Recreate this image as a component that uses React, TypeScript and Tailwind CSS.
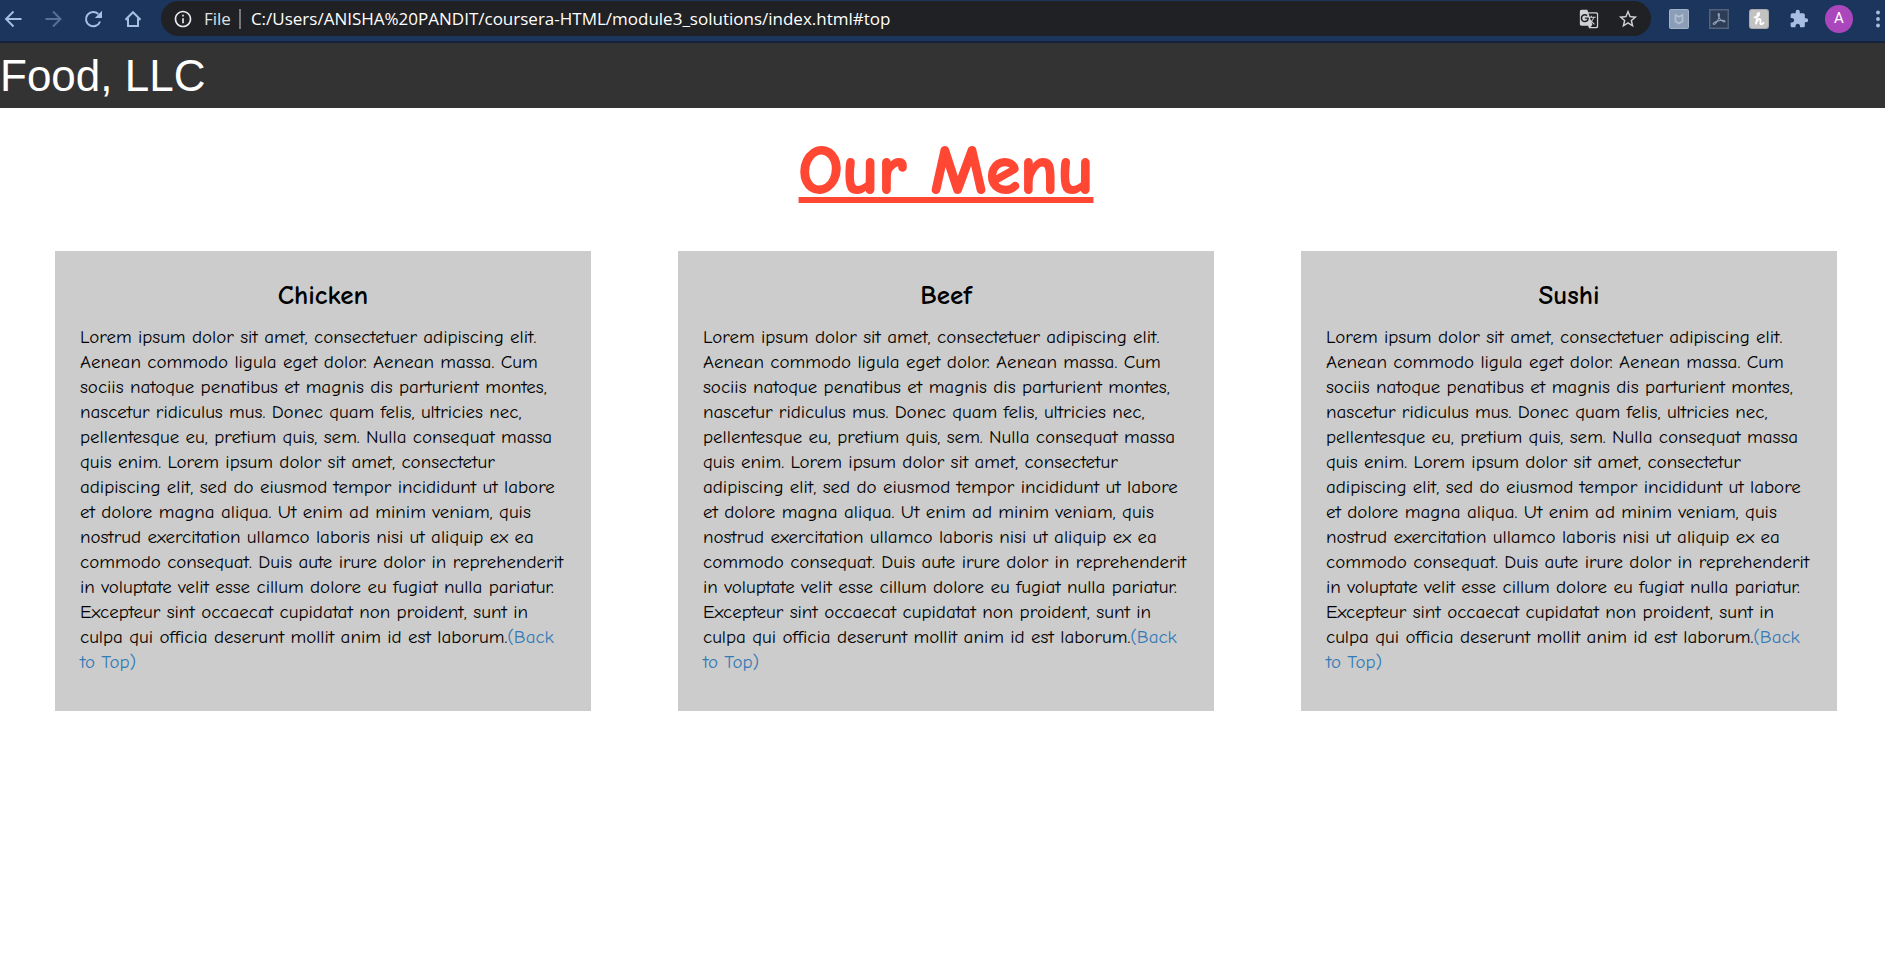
import { MdExtension, MdGTranslate, MdInfoOutline, MdStarOutline } from "react-icons/md";

const DESCRIPTION =
  "Lorem ipsum dolor sit amet, consectetuer adipiscing elit. Aenean commodo ligula eget dolor. Aenean massa. Cum sociis natoque penatibus et magnis dis parturient montes, nascetur ridiculus mus. Donec quam felis, ultricies nec, pellentesque eu, pretium quis, sem. Nulla consequat massa quis enim. Lorem ipsum dolor sit amet, consectetur adipiscing elit, sed do eiusmod tempor incididunt ut labore et dolore magna aliqua. Ut enim ad minim veniam, quis nostrud exercitation ullamco laboris nisi ut aliquip ex ea commodo consequat. Duis aute irure dolor in reprehenderit in voluptate velit esse cillum dolore eu fugiat nulla pariatur. Excepteur sint occaecat cupidatat non proident, sunt in culpa qui officia deserunt mollit anim id est laborum.";

function BrowserBar() {
  return (
    <div className="flex h-[43px] items-start border-b-2 border-[#17233c] bg-[#1b355d] pl-[3px] pt-px text-[#a9bfe2]">
      <nav className="flex h-[35px] items-center gap-5">
        <button aria-label="Back" className="size-5">
          <svg viewBox="0 0 20 20" className="size-5" fill="none" stroke="currentColor" strokeWidth="1.9">
            <path d="M18.5 10H3.5M10.5 2.5L3 10l7.5 7.5" />
          </svg>
        </button>
        <button aria-label="Forward" className="size-5 text-[#5a7197]">
          <svg viewBox="0 0 20 20" className="size-5" fill="none" stroke="currentColor" strokeWidth="1.9">
            <path d="M2.500 10h15M10 2.500L17.500 10l-7.500 7.500" />
          </svg>
        </button>
        <button aria-label="Reload" className="size-5">
          <svg viewBox="0 0 20 20" className="size-5" fill="none" stroke="currentColor" strokeWidth="2">
            <path d="M17 12.500A7.200 7.200 0 1 1 15.300 5" />
            <path d="M19 1.800V9h-7.200z" fill="currentColor" stroke="none" />
          </svg>
        </button>
        <button aria-label="Home" className="size-5">
          <svg viewBox="0 0 20 20" className="size-5" fill="none" stroke="currentColor" strokeWidth="2">
            <path d="M2.500 10.700L10 3.200l7.500 7.500M2.500 10.200H5V17h10v-6.800h2.500" />
          </svg>
        </button>
      </nav>

      <div className="ml-[18px] flex h-[35px] min-w-0 flex-1 items-center rounded-full bg-[#202124] pl-3 pr-3 font-['Open_Sans','Noto_Sans',sans-serif] text-[17px] text-white">
        <MdInfoOutline className="size-5 shrink-0 text-[#e8eaed]" />
        <span className="ml-[11px] text-[#dfe1e5]">File</span>
        <span className="ml-2 h-5 w-0.5 bg-[#76787b]" />
        <input
          aria-label="Address"
          className="ml-[10px] min-w-0 flex-1 bg-transparent outline-none"
          defaultValue="C:/Users/ANISHA%20PANDIT/coursera-HTML/module3_solutions/index.html#top"
        />
        <button aria-label="Translate this page" className="text-[#d0d1d3]">
          <MdGTranslate className="size-[20px]" />
        </button>
        <button aria-label="Bookmark" className="ml-[18px] text-[#d0d1d3]">
          <MdStarOutline className="size-[22px]" />
        </button>
      </div>

      <div className="ml-[14px] flex h-[35px] items-center gap-3">
        <button aria-label="Shield extension" className="flex w-7 justify-center">
          <svg viewBox="0 0 20 20" className="size-5">
            <rect width="20" height="20" rx="2" fill="#a3b2c7" />
            <rect x="1" y="1" width="18" height="18" rx="1" fill="#8b9db7" />
            <path d="M6.500 6l3.500 1.800L13.500 6v6.500L10 14.500 6.500 12.500z" fill="none" stroke="#b4bfce" strokeWidth="1.700" />
          </svg>
        </button>
        <button aria-label="PDF extension" className="flex w-7 justify-center">
          <svg viewBox="0 0 20 20" className="size-5">
            <rect x=".75" y=".75" width="18.500" height="18.500" fill="#2d3d56" stroke="#52637e" strokeWidth="1.500" />
            <path
              d="M4.500 15.300c-1.300-.8 1.600-2.600 4.800-3.400 3.300-.9 6.700-.8 6.700.4 0 1.400-3.300.1-5-2.300C9.400 7.900 8.600 4.600 9.700 4.500c1.300-.1.700 3.800-1 7.100-1.300 2.400-3.200 4.300-4.200 3.700z"
              fill="none"
              stroke="#94a3b8"
              strokeWidth="1.100"
            />
          </svg>
        </button>
        <button aria-label="Honey extension" className="flex w-7 justify-center">
          <svg viewBox="0 0 20 20" className="size-5">
            <rect width="20" height="20" rx="3" fill="#a9a9a9" />
            <rect x="1" y="1" width="18" height="18" rx="2" fill="#c2c2c2" />
            <path
              d="M5.500 8.300c2.600-.3 4.700-1.800 4.700-3.500 0-1.500-1.500-.7-1.900 1.200L7 15.300c.6-3.200 1.900-5.300 3.700-5.300 2 0-.4 4.900 1.200 5.200.9.200 1.900-.5 2.600-1.500"
              fill="none"
              stroke="#fff"
              strokeWidth="1.800"
              strokeLinecap="round"
            />
          </svg>
        </button>
        <button aria-label="Extensions" className="flex w-7 justify-center">
          <MdExtension className="size-5" />
        </button>
        <button
          aria-label="Profile"
          className="flex size-7 items-center justify-center rounded-full bg-[#ab47bc] font-['Roboto',sans-serif] text-[15px] text-white"
        >
          A
        </button>
        <button aria-label="Browser menu" className="flex w-5 justify-end pr-1">
          <svg viewBox="0 0 6 20" className="h-5 w-1.5" fill="currentColor">
            <circle cx="3" cy="3.500" r="1.900" />
            <circle cx="3" cy="10" r="1.900" />
            <circle cx="3" cy="16.500" r="1.900" />
          </svg>
        </button>
      </div>
    </div>
  );
}

function MenuCard({ title }: { title: string }) {
  return (
    <section className="bg-[#cccccc] px-[25px] pb-9 pt-[25px] text-black">
      <h2 className="pb-[9px] text-center text-[27px] font-bold leading-[40px]">{title}</h2>
      <p className="text-[19px] leading-[25px] [font-variant-ligatures:none]">
        {DESCRIPTION}
        <a href="#top" className="text-[#337ab7]">
          (Back to Top)
        </a>
      </p>
    </section>
  );
}

export default function App() {
  return (
    <div id="top" className="min-h-screen bg-white">
      <BrowserBar />
      <header className="bg-[#333333] font-['Liberation_Sans',Arial,sans-serif]">
        <a href="#top" className="block text-[44px] leading-[65px] text-white">
          Food, LLC
        </a>
      </header>
      <main className="font-['Comic_Sans_MS','Comic_Neue','Noto_Sans',sans-serif]">
        <h1 className="pb-[35px] pl-[7px] pt-[18px] text-center text-[69px] font-bold leading-[90px] text-[#ff4733] underline decoration-[6px] underline-offset-4 [-webkit-text-stroke:2px_#ff4733]">
          Our Menu
        </h1>
        <div className="grid grid-cols-3 gap-[87px] pl-[55px] pr-12">
          <MenuCard title="Chicken" />
          <MenuCard title="Beef" />
          <MenuCard title="Sushi" />
        </div>
      </main>
    </div>
  );
}
